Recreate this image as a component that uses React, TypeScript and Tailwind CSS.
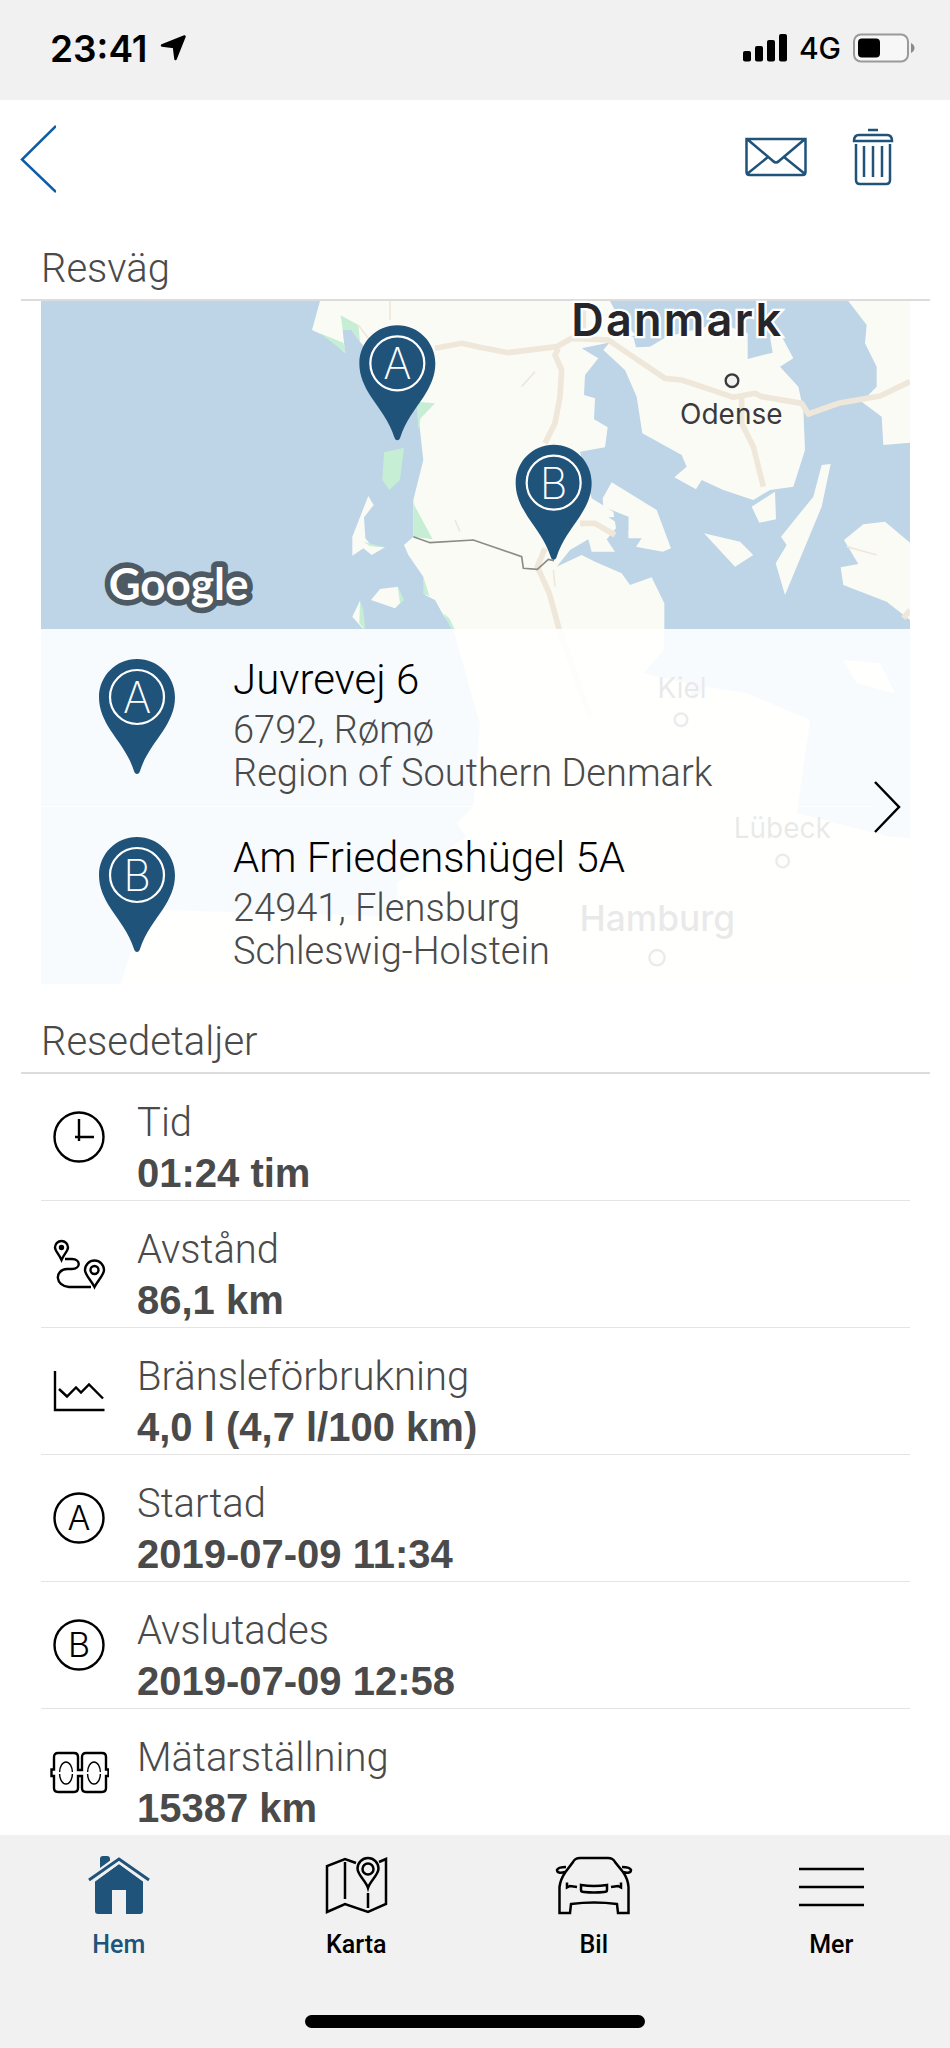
import type { ReactNode } from "react";

const LIGHT = "font-['Roboto','Liberation_Sans',sans-serif] font-light";
const LAND = "#fbfbf6";
const PARK = "#c5eed5";

function PinShape({ letter }: { letter: string }) {
  return (
    <>
      <path
        d="M38 0C17 0 0 17 0 38c0 13 5 23 12 34 8 12 18 24 23 40 1 4 5 4 6 0 5-16 15-28 23-40 7-11 12-21 12-34C76 17 59 0 38 0Z"
        fill="#20537a"
      />
      <circle cx="38" cy="38" r="27" fill="none" stroke="#fff" strokeWidth="2.200" />
      <text x="38" y="54" textAnchor="middle" fill="#fff" className="font-['Inter',sans-serif] text-[43px] font-extralight">
        {letter}
      </text>
    </>
  );
}

function Pin({ letter }: { letter: string }) {
  return (
    <svg viewBox="0 0 76 115" className="h-[115px] w-[76px] shrink-0" aria-hidden="true">
      <PinShape letter={letter} />
    </svg>
  );
}

function MapDrawing() {
  return (
    <svg
      viewBox="33 33 2607 2049"
      preserveAspectRatio="xMidYMin slice"
      className="absolute inset-0 h-full w-full overflow-visible"
      role="img"
      aria-label="Karta"
    >
      <clipPath id="map-frame">
        <rect x="33" y="33" width="2607" height="2049" />
      </clipPath>
      <g clipPath="url(#map-frame)">
        <rect x="0" y="0" width="2700" height="2100" fill="#bdd5e6" />
        <g fill={LAND}>
          {/* Jutland and northern Germany */}
          <path d="M870 33 846 120 890 140 945 188 938 120 965 120 990 155 1060 240 1165 330 1165 375 1170 420 1180 510 1150 630 1150 740 1122 765 1135 795 1180 860 1185 915 1215 930 1240 975 1272 1020 1290 1090 1350 1300 1330 1550 1280 1600 1310 1640 1100 1780 1110 1880 750 1870 400 1860 330 1900 270 2090H2700V1650L2580 1640 2300 1570 2340 1290 2150 1210 2030 1190 1990 1230 1970 1180 1840 1150 1900 1080 1903 1020 1903 940 1865 862 1800 885 1775 850 1695 815 1655 795 1580 830 1620 780 1675 748 1685 785 1755 785 1730 748 1758 715 1750 665 1685 625 1650 485 1725 472 1733 412 1692 388 1695 325 1662 315 1665 255 1705 205 1655 175 1750 155 1818 135 1770 90 1740 33Z" />
          {/* Funen */}
          <path d="M1720 180 1745 150 1810 140 1818 172 1860 170 1910 140 2070 100 2153 130 2153 207 2228 188 2220 140 2250 130 2290 205 2250 230 2305 290 2320 360 2325 480 2290 590 2220 600 2170 630 2080 600 2015 570 1998 598 1933 562 1970 530 1955 495 1837 430 1820 320 1785 240Z" />
          {/* Zealand, Lolland and the smaller islands */}
          <path d="M2455 33 2510 105 2505 160 2540 230 2540 290 2495 335 2555 380 2560 465 2640 458H2700V33Z" />
          <path d="M2375 525 2402 522 2375 650 2265 915 2237 820 2270 765 2253 740 2350 620Z" />
          <path d="M2022 730 2130 755 2170 795 2115 830Z" />
          <path d="M2165 650 2235 605 2238 688 2188 698Z" />
          <path d="M2442 750 2500 703 2565 695 2640 758 2700 800V1030L2640 990 2570 935 2440 885 2432 832 2485 822Z" />
          <path d="M1745 577 1880 660 1923 775 1898 785 1818 770 1835 745 1795 745 1795 680 1720 650 1718 625Z" />
          <path d="M2440 1110 2550 1120 2595 1210 2480 1180Z" />
          <path d="M1015 618 1031 645 1002 682 1006 745 1025 768 1065 772 1025 795 1000 775 967 797 967 740Z" />
          <path d="M1023 930 1050 897 1103 890 1120 930 1095 955Z" />
          <path d="M990 932 1000 1018 967 980Z" />
        </g>
        <path d="M1735 682 1795 680 1795 720Z" fill="#bdd5e6" />
        <path
          d="M932 76 985 105 990 155 965 120 938 120ZM870 130 940 158 948 190ZM1062 487 1122 473 1110 570 1078 600 1057 570ZM1160 335 1215 340 1172 385 1165 420ZM1150 640 1208 748 1150 740ZM1180 860 1198 918 1180 912ZM990 932 1000 960 1006 1020 988 1000ZM1240 970 1258 985 1275 1020H1265ZM1000 755 1065 772 1020 768ZM1103 890 1122 930 1110 940Z"
          fill={PARK}
        />
        <g fill="none" stroke="#efe7da" strokeWidth="17" strokeLinejoin="round">
          <path d="M1215 175 1295 160 1350 172 1435 188 1580 170 1625 145 1735 150 1905 265 1955 270 2040 298 2110 322 2175 310 2195 320 2315 340 2335 372 2425 340 2550 318 2640 275" />
          <path d="M1585 175 1575 195 1595 240 1590 320 1575 400 1545 460M1545 775 1522 830 1558 910 1588 1020 1680 1280M2135 322 2135 400 2170 470 2200 590M1650 700 1695 700 1755 735M2640 960 2620 985" />
          <path d="M1660 60V130" />
          <path d="M1080 33V90M985 105 1015 145M1275 690 1290 725M1475 290 1515 245M2450 770 2540 795M1570 840 1575 890" strokeWidth="5" />
        </g>
        <path
          d="M1150 740 1200 758 1330 750 1475 800 1480 835 1522 838 1555 808 1572 812"
          fill="none"
          stroke="#8b8b88"
          strokeWidth="5"
        />
      </g>
      <g className="font-['Inter',sans-serif]" fill="#26262a" textAnchor="middle">
        <text x="1942" y="137" stroke="#fff" strokeWidth="14" paintOrder="stroke" className="text-[135px] font-semibold tracking-wider">
          Danmark
        </text>
        <text x="2104" y="403" className="text-[84px]" fill="#3a3a3e">Odense</text>
        <text x="1956" y="1223" className="text-[84px]">Kiel</text>
        <text x="2257" y="1645" className="text-[84px]">Lübeck</text>
        <text x="1882" y="1923" className="text-[106px] font-medium">Hamburg</text>
      </g>
      <g fill="#f2f2f2" stroke="#3a3a3e" strokeWidth="7">
        <circle cx="2106" cy="272" r="19" />
        <circle cx="1953" cy="1289" r="19" />
        <circle cx="2258" cy="1713" r="19" />
        <circle cx="1881" cy="2003" r="23" />
      </g>
      <text
        x="236"
        y="930"
        fill="#fff"
        stroke="#4d5a63"
        strokeWidth="34"
        strokeLinejoin="round"
        paintOrder="stroke"
        className="font-['Lato',sans-serif] text-[132px] font-bold"
      >
        Google
      </text>
      <g transform="translate(988 106) scale(3)">
        <PinShape letter="A" />
      </g>
      <g transform="translate(1457 464) scale(3)">
        <PinShape letter="B" />
      </g>
    </svg>
  );
}

function Place({ letter, title, lines }: { letter: string; title: string; lines: string[] }) {
  return (
    <li className="flex gap-[58px] pt-[22px] pb-[11px] pl-[58px]">
      <div className="pt-2">
        <Pin letter={letter} />
      </div>
      <div className={LIGHT}>
        <h3 className="text-[42px] leading-[58px] text-black">{title}</h3>
        {lines.map((line) => (
          <p key={line} className="text-[38px] leading-[43px] text-[#4a4a4a]">
            {line}
          </p>
        ))}
      </div>
    </li>
  );
}

function SectionTitle({ children, className }: { children: ReactNode; className: string }) {
  return (
    <div className={`mr-5 ml-[21px] border-b-2 border-[#dcdcdc] px-5 ${className}`}>
      <h2 className={`${LIGHT} text-[40px] leading-[48px] text-[#4a4a4a]`}>{children}</h2>
    </div>
  );
}

function DetailIcon({ children }: { children: ReactNode }) {
  return (
    <svg viewBox="0 0 60 60" className="size-[60px]" fill="none" stroke="#000" strokeWidth="2.400" aria-hidden="true">
      {children}
    </svg>
  );
}

function LetterIcon({ letter }: { letter: string }) {
  return (
    <DetailIcon>
      <circle cx="30" cy="30" r="24.500" />
      <text x="30" y="42" textAnchor="middle" fill="#000" stroke="none" className="font-['Inter',sans-serif] text-[34px] font-light">
        {letter}
      </text>
    </DetailIcon>
  );
}

const details: { label: string; value: string; icon: ReactNode }[] = [
  {
    label: "Tid",
    value: "01:24 tim",
    icon: (
      <DetailIcon>
        <circle cx="30" cy="30" r="24.500" />
        <path d="M30 12v22M26 30h19" />
      </DetailIcon>
    ),
  },
  {
    label: "Avstånd",
    value: "86,1 km",
    icon: (
      <DetailIcon>
        <path d="M12.500 26C10 20 6 17 6 13.500a6.500 6.500 0 0 1 13 0C19 17 15 20 12.500 26Z" />
        <circle cx="12.500" cy="13.500" r="1.500" fill="#000" />
        <path d="M45.500 53C42 46 36 41 36 36a9.500 9.500 0 0 1 19 0c0 5-6 10-9.500 17Z" />
        <circle cx="45.500" cy="36" r="4" />
        <path d="M16 25h7c9 0 9 10 0 10h-5c-13 1-12 17 2 18h22" />
      </DetailIcon>
    ),
  },
  {
    label: "Bränsleförbrukning",
    value: "4,0 l (4,7 l/100 km)",
    icon: (
      <DetailIcon>
        <path d="M6 10v39h49.500M10 28l8 7.500 9-9 5 5 8-8 14 14" />
      </DetailIcon>
    ),
  },
  { label: "Startad", value: "2019-07-09 11:34", icon: <LetterIcon letter="A" /> },
  { label: "Avslutades", value: "2019-07-09 12:58", icon: <LetterIcon letter="B" /> },
  {
    label: "Mätarställning",
    value: "15387 km",
    icon: (
      <DetailIcon>
        <path d="M2.500 31v-3.500H5V15q0-4 4-4h16q4 0 4 4v13h4V15q0-4 4-4h16q4 0 4 4v12.500h2.500V31M2.500 31v3H5v12q0 4 4 4h16q4 0 4-4V34h4v12q0 4 4 4h16q4 0 4-4V34h2.500v-3" />
        <g strokeWidth="1.400">
          <ellipse cx="17" cy="31" rx="6.500" ry="11" />
          <ellipse cx="45" cy="31" rx="6.500" ry="11" />
        </g>
        <path d="M4 31h53" stroke="#fff" strokeWidth="2" />
      </DetailIcon>
    ),
  },
];

function NavItem({ label, active, children }: { label: string; active?: boolean; children: ReactNode }) {
  return (
    <a
      href="#"
      aria-current={active ? "page" : undefined}
      className={`flex flex-col items-center gap-[14px] pt-5 ${active ? "text-[#20537a]" : "text-black"}`}
    >
      <svg viewBox="0 0 78 60" className="h-[60px] w-[78px]" fill="none" stroke="currentColor" strokeWidth="2.500" aria-hidden="true">
        {children}
      </svg>
      <span className="font-['Roboto','Liberation_Sans',sans-serif] text-[25px] leading-8 font-medium">{label}</span>
    </a>
  );
}

export default function App() {
  return (
    <div className="flex min-h-screen flex-col bg-white">
      <div className="flex h-[100px] items-center justify-between bg-[#f1f1f1] pr-[35px] pb-1 pl-[50px] font-['Inter',sans-serif] text-black">
        <div className="flex items-center gap-3">
          <span className="text-[37px] leading-none font-semibold">23:41</span>
          <svg viewBox="0 0 26 26" className="size-[26px]" aria-hidden="true">
            <path
              d="M24.500 1.500 15.500 24 14 12 2 10.500Z"
              fill="#000"
              stroke="#000"
              strokeWidth="2.500"
              strokeLinejoin="round"
            />
          </svg>
        </div>
        <div className="flex items-center gap-3">
          <svg viewBox="0 0 44 28" className="h-7 w-11" aria-hidden="true">
            <rect x="0" y="17" width="8" height="10.500" rx="2" />
            <rect x="12" y="12" width="8" height="15.500" rx="2" />
            <rect x="24" y="6" width="8" height="21.500" rx="2" />
            <rect x="36" y="0" width="8" height="27.500" rx="2" />
          </svg>
          <span className="text-[30px] leading-none font-medium">4G</span>
          <svg viewBox="0 0 62 30" className="h-[30px] w-[62px]" aria-hidden="true">
            <rect x="1" y="1.500" width="54" height="27" rx="7" fill="#f7f7f7" stroke="#9a9a9a" strokeWidth="2" />
            <rect x="5" y="5.500" width="22" height="19" rx="4" />
            <path d="M58 10q3.500 2 3.500 5T58 20Z" fill="#8a8a8a" />
          </svg>
        </div>
      </div>

      <header className="flex h-[118px] items-center justify-between pr-14 pl-5">
        <button type="button" aria-label="Tillbaka">
          <svg viewBox="0 0 36 68" className="h-[68px] w-9" fill="none" stroke="#0f5cab" strokeWidth="2.500">
            <path d="M36 1 2 34.500 36 67" />
          </svg>
        </button>
        <div className="flex items-center gap-[45px] pb-1">
          <button type="button" aria-label="Skicka">
            <svg viewBox="0 0 62 40" className="h-10 w-[62px]" fill="none" stroke="#20537a" strokeWidth="2.500">
              <path d="M1.500 2h59v33q0 3-3 3h-53q-3 0-3-3ZM2 2l26 22q3 3 6 0L60 2M2 37l21-17M60 37 39 20" />
            </svg>
          </button>
          <button type="button" aria-label="Ta bort">
            <svg viewBox="0 0 42 58" className="h-[58px] w-[42px]" fill="none" stroke="#20537a" strokeWidth="2.500">
              <path d="M16 2h10M2 13q0-6 5-6h28q5 0 5 6ZM4 16v36q0 4 4 4h26q4 0 4-4V16M12 18v31M21 18v31M30 18v31" />
            </svg>
          </button>
        </div>
      </header>

      <main className="flex-1">
        <SectionTitle className="pt-[27px] pb-[6px]">Resväg</SectionTitle>
        <section className="relative mr-10 ml-[41px] flex flex-col">
          <MapDrawing />
          <div className="relative mt-[328px] flex items-center bg-white/90">
            <ol className="flex-1 divide-y divide-white">
              <Place letter="A" title="Juvrevej 6" lines={["6792, Rømø", "Region of Southern Denmark"]} />
              <Place letter="B" title="Am Friedenshügel 5A" lines={["24941, Flensburg", "Schleswig-Holstein"]} />
            </ol>
            <button type="button" aria-label="Visa resväg" className="pr-[9px]">
              <svg viewBox="0 0 27 52" className="h-[52px] w-[27px]" fill="none" stroke="#000" strokeWidth="2.500">
                <path d="M1 1 25 26 1 51" />
              </svg>
            </button>
          </div>
        </section>

        <SectionTitle className="pt-[34px] pb-[6px]">Resedetaljer</SectionTitle>
        <dl className="mr-10 ml-[41px]">
          {details.map(({ label, value, icon }) => (
            <div key={label} className="flex items-center gap-[28px] border-b border-[#e4e4e4] pl-2 last:border-b-0">
              {icon}
              <div className="pt-[23px] pb-px text-[40px] text-[#4a4a4a]">
                <dt className={`${LIGHT} leading-[51px]`}>{label}</dt>
                <dd className="font-['Liberation_Sans',sans-serif] leading-[51px] font-bold">{value}</dd>
              </div>
            </div>
          ))}
        </dl>
      </main>

      <footer className="flex flex-col items-center bg-[#f1f1f1] pb-5">
        <nav className="grid w-full grid-cols-4 pb-[54px]">
          <NavItem label="Hem" active>
            <path d="M20 18V4q0-3 3-3h4q3 0 3 3v8ZM15 26 39 9l24 17v30q0 3-3 3H46V35H32v24H18q-3 0-3-3Z" fill="currentColor" stroke="none" />
            <path d="M9 26 39 4l30 22" stroke="#f1f1f1" strokeWidth="8" />
            <path d="M9 25 39 4l30 21" strokeWidth="3" />
          </NavItem>
          <NavItem label="Karta">
            <path d="M39 8 28 4 10 11v46l18-8 23 8 18-8V4l-7 3M28 7v37M51 38v15" />
            <path d="M51 33C49 26 40.500 20 40.500 13.500a10.500 10.500 0 0 1 21 0C61.500 20 53 26 51 33Z" />
            <circle cx="51" cy="14" r="5.500" />
          </NavItem>
          <NavItem label="Bil">
            <path d="M4.500 58V32q1-8 6-15L18 7q2-4 7-4h28q5 0 7 4l8 10q5 7 5.500 15v26H63l-1-9q-23-3-46 0l-1 9ZM10 17q-8 2-8-2 1-3 9-3M68 17q8 2 8-2-1-3-9-3M26 30q13 2 26 0v5q0 2-3 2-10 1-20 0-3 0-3-2Z" />
            <path d="M12 27.500v5l3-1.500 7 1M66 27.500v5L63 31l-7 1" />
          </NavItem>
          <NavItem label="Mer">
            <path d="M7 14h65M7 32h65M7 50h65" />
          </NavItem>
        </nav>
        <div className="h-[13px] w-[340px] rounded-full bg-black" />
      </footer>
    </div>
  );
}
